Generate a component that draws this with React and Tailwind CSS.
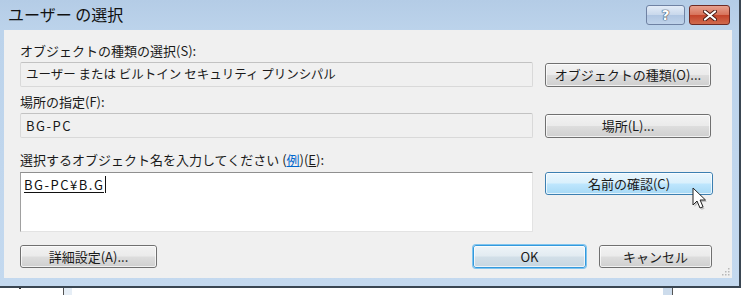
import React from 'react';

const jp = "font-['Meiryo_UI','Noto_Sans_CJK_JP',sans-serif]";

function Btn({ children, kind = 'normal', className = '' }) {
    const skins = {
        normal: 'border-[#707070] bg-[linear-gradient(to_bottom,#f2f2f2_0%,#ebebeb_48%,#dddddd_52%,#cfcfcf_100%)]',
        hover: 'border-[#3c7fb1] bg-[linear-gradient(to_bottom,#eaf6fd_0%,#d9f0fc_48%,#bee6fd_52%,#a7d9f5_100%)]',
        default: 'border-[#3399dd] shadow-[0_0_0_1px_#7fc4ee] bg-[linear-gradient(to_bottom,#eef4f8_0%,#e2ebf1_48%,#d2dfe8_52%,#c6d6e1_100%)]',
    };
    return (
        <div className={`flex items-center justify-center rounded-[3px] border ${skins[kind]} ${className}`}>
            <div className="flex h-full w-full items-center justify-center rounded-[2px] border border-white/70 text-[13px] leading-none text-[#1a1a1a]">
                {children}
            </div>
        </div>
    );
}

function ReadOnlyBox({ children, className = '' }) {
    return (
        <div className={`flex h-[25px] w-[513px] items-center rounded-[2px] border border-[#d9d9d9] border-t-[#c2c2c2] bg-[#f0f0f0] pl-[5px] text-[#1a1a1a] ${className}`}>
            {children}
        </div>
    );
}

function Cursor() {
    // mouse pointer resting on the hovered button
    return (
        <svg className="absolute left-[692px] top-[187px]" width="18" height="26" viewBox="0 0 18 26">
            <path d="M2.5 3 L2.5 20 L6.5 16 L9.5 23 L12.5 21.8 L9.6 15 L15 15 Z" fill="#000" opacity="0.18" />
            <path d="M1 1 L1 18 L5 14 L8 21 L11 19.8 L8.1 13 L13.5 13 Z" fill="#fff" stroke="#222" strokeWidth="1" strokeLinejoin="round" />
        </svg>
    );
}

export default function App() {
    return (
        <div className={`relative h-[295px] w-[752px] overflow-hidden bg-white ${jp}`}>
            {/* window behind, peeking out below */}
            <div className="absolute left-[63px] top-[286px] h-[9px] w-px bg-[#555]" />
            <div className="absolute left-[64px] top-[286px] h-[9px] w-[8px] bg-[#e6eef6]" />
            <div className="absolute left-[19px] top-[286px] h-[3px] w-[2px] bg-[#333]" />
            <div className="absolute left-[663px] top-[286px] h-[9px] w-[9px] bg-[#cddcec]" />
            <div className="absolute left-[672px] top-[286px] h-[9px] w-px bg-[#555]" />

            {/* dialog window */}
            <div className="relative flex h-[288px] w-[741px] flex-col border-b-2 border-r-2 border-[#3a4652] bg-[linear-gradient(to_bottom,#b4cce6_0px,#bcd3eb_30px,#c4d9ef_100%)] pb-[6px] pl-[4px] pr-[7px]">
                {/* title bar */}
                <div className="flex h-[30px] items-start justify-between">
                    <div className="pl-[4px] pt-[4px] text-[16px] leading-[20px] text-[#111]">ユーザー の選択</div>
                    <div className="flex gap-[4px] pr-[2px] pt-[5px]">
                        <div className="flex h-[20px] w-[39px] items-center justify-center rounded-[3px] border border-[#6f82a3] bg-[linear-gradient(to_bottom,#e3ecf7_0%,#c9d8ec_48%,#b0c6e2_52%,#bfd3ea_100%)]">
                            <span className="font-['DejaVu_Sans',sans-serif] text-[14px] font-bold leading-none text-white [text-shadow:0_0_1px_#33475f,0_0_1px_#33475f,0_0_1px_#33475f]">?</span>
                        </div>
                        <div className="flex h-[20px] w-[41px] items-center justify-center rounded-[3px] border border-[#6e2a24] bg-[linear-gradient(to_bottom,#e7a08e_0%,#d8745c_48%,#c4432a_52%,#d06a4e_100%)]">
                            <svg width="14" height="11" viewBox="0 0 14 11">
                                <path d="M2 1.5 L12 9.5 M12 1.5 L2 9.5" stroke="#4a1a14" strokeWidth="4" strokeLinecap="round" />
                                <path d="M2 1.5 L12 9.5 M12 1.5 L2 9.5" stroke="#fff" strokeWidth="2.2" strokeLinecap="round" />
                            </svg>
                        </div>
                    </div>
                </div>

                {/* client area */}
                <div className="relative flex h-[248px] flex-col bg-[#f0f0f0] pl-[16px] pt-[13px]">
                    <div className="h-[16px] text-[13px] leading-[16px] text-[#1a1a1a]">オブジェクトの種類の選択(S):</div>
                    <div className="mt-[3px] flex h-[25px] items-center gap-[12px]">
                        <ReadOnlyBox className="text-[12.5px]">ユーザー または ビルトイン セキュリティ プリンシパル</ReadOnlyBox>
                        <Btn className="h-[24px] w-[166px]">オブジェクトの種類(O)...</Btn>
                    </div>

                    <div className="mt-[7px] h-[16px] text-[13px] leading-[16px] text-[#1a1a1a]">場所の指定(F):</div>
                    <div className="mt-[3px] flex h-[25px] items-center gap-[12px]">
                        <ReadOnlyBox className="text-[13px] tracking-[1.5px]">BG-PC</ReadOnlyBox>
                        <Btn className="h-[24px] w-[166px]">場所(L)...</Btn>
                    </div>

                    <div className="mt-[14px] h-[16px] text-[13px] leading-[16px] text-[#1a1a1a]">
                        選択するオブジェクト名を入力してください (<span className="text-[#0066cc] underline">例</span>)(<span className="underline">E</span>):
                    </div>
                    <div className="mt-[4px] flex h-[60px] items-start gap-[12px]">
                        <div className="h-[60px] w-[513px] border border-[#e3e3e3] border-l-[#a0a0a0] border-t-[#8f8f8f] bg-white pl-[3px] pt-[3px]">
                            <div className="flex h-[17px] items-center text-[13px] text-[#111]">
                                <span className="border-b border-[#111] leading-[15px] tracking-[1.5px]">BG-PC¥B.G</span>
                                <span className="ml-px h-[17px] w-px bg-[#111]" />
                            </div>
                        </div>
                        <Btn kind="hover" className="h-[23px] w-[168px]">名前の確認(C)</Btn>
                    </div>

                    <div className="mt-[13px] flex h-[23px] items-center pr-[20px]">
                        <Btn className="h-[23px] w-[137px]">詳細設定(A)...</Btn>
                        <Btn kind="default" className="ml-auto h-[23px] w-[113px]">OK</Btn>
                        <Btn className="ml-[13px] h-[23px] w-[113px]">キャンセル</Btn>
                    </div>

                    {/* size grip */}
                    <svg className="absolute bottom-[2px] right-[2px]" width="10" height="10" viewBox="0 0 10 10">
                        {[[8, 2], [8, 5], [5, 5], [8, 8], [5, 8], [2, 8]].map(([x, y]) => (
                            <rect key={`${x}-${y}`} x={x} y={y} width="1.5" height="1.5" fill="#b8b8b8" />
                        ))}
                    </svg>
                </div>
            </div>

            <Cursor />
        </div>
    );
}
